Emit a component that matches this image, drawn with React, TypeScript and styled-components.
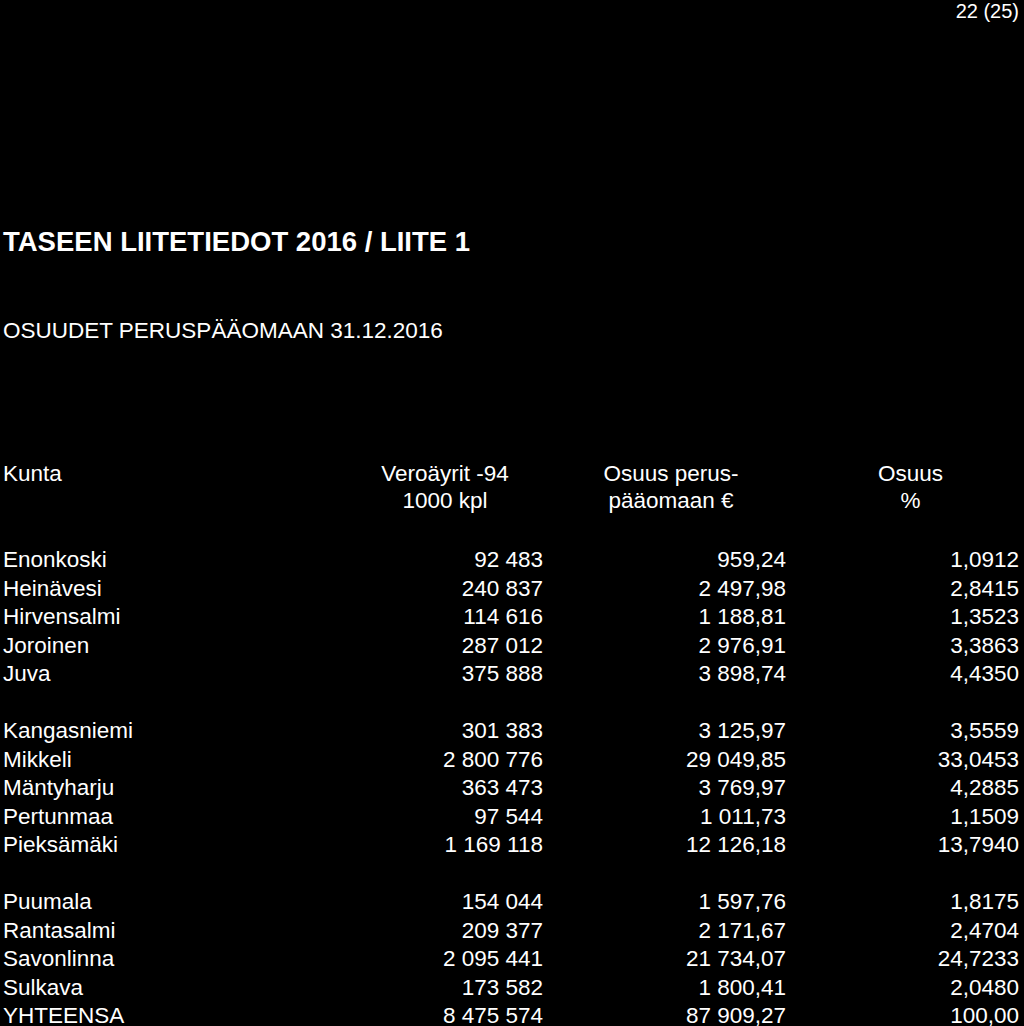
import styled, { createGlobalStyle } from 'styled-components';

const GlobalStyle = createGlobalStyle`
  html, body {
    margin: 0;
    padding: 0;
    background: #000;
  }
  body {
    font-family: "Liberation Sans", Arial, sans-serif;
    color: #fff;
  }
`;

type Row = [string, string, string, string];

const groups: Row[][] = [
  [
    ['Enonkoski', '92 483', '959,24', '1,0912'],
    ['Heinävesi', '240 837', '2 497,98', '2,8415'],
    ['Hirvensalmi', '114 616', '1 188,81', '1,3523'],
    ['Joroinen', '287 012', '2 976,91', '3,3863'],
    ['Juva', '375 888', '3 898,74', '4,4350'],
  ],
  [
    ['Kangasniemi', '301 383', '3 125,97', '3,5559'],
    ['Mikkeli', '2 800 776', '29 049,85', '33,0453'],
    ['Mäntyharju', '363 473', '3 769,97', '4,2885'],
    ['Pertunmaa', '97 544', '1 011,73', '1,1509'],
    ['Pieksämäki', '1 169 118', '12 126,18', '13,7940'],
  ],
  [
    ['Puumala', '154 044', '1 597,76', '1,8175'],
    ['Rantasalmi', '209 377', '2 171,67', '2,4704'],
    ['Savonlinna', '2 095 441', '21 734,07', '24,7233'],
    ['Sulkava', '173 582', '1 800,41', '2,0480'],
    ['YHTEENSA', '8 475 574', '87 909,27', '100,00'],
  ],
];

const Page = styled.div`
  width: 1024px;
  height: 1026px;
  overflow: hidden;
  box-sizing: border-box;
  padding: 1px 5px 0 3px;
`;

const PageNumber = styled.div`
  font-size: 20px;
  line-height: 20px;
  text-align: right;
`;

const Title = styled.h1`
  margin: 205px 0 0;
  font-size: 27.5px;
  line-height: 32px;
  font-weight: bold;
`;

const Subtitle = styled.div`
  margin-top: 60px;
  font-size: 22.5px;
  line-height: 26px;
`;

const Table = styled.div`
  display: grid;
  grid-template-columns: 347px 193px 243px 233px;
  font-size: 22.5px;
`;

// rows only group cells for readability, the grid does the layout
const TableRow = styled.div`
  display: contents;
`;

const HeaderCell = styled.div<{ $shift?: number }>`
  margin: 116px 0 32px;
  line-height: 27px;
  text-align: center;
  padding-left: ${(p) => (p.$shift && p.$shift > 0 ? p.$shift : 0)}px;
  padding-right: ${(p) => (p.$shift && p.$shift < 0 ? -p.$shift : 0)}px;
`;

const NameHeader = styled(HeaderCell)`
  text-align: left;
`;

const Cell = styled.div<{ $gapAfter?: boolean }>`
  line-height: 28.5px;
  text-align: right;
  white-space: nowrap;
  margin-bottom: ${(p) => (p.$gapAfter ? '28.5px' : '0')};
`;

const NameCell = styled(Cell)`
  text-align: left;
`;

export default function App() {
  return (
    <>
      <GlobalStyle />
      <Page>
        <PageNumber>22 (25)</PageNumber>
        <Title>TASEEN LIITETIEDOT 2016 / LIITE 1</Title>
        <Subtitle>OSUUDET PERUSPÄÄOMAAN 31.12.2016</Subtitle>
        <Table>
          <TableRow>
            <NameHeader>Kunta</NameHeader>
            <HeaderCell $shift={-3}>
              Veroäyrit -94
              <br />
              1000 kpl
            </HeaderCell>
            <HeaderCell $shift={13}>
              Osuus perus-
              <br />
              pääomaan €
            </HeaderCell>
            <HeaderCell $shift={16}>
              Osuus
              <br />%
            </HeaderCell>
          </TableRow>
          {groups.map((rows, gi) =>
            rows.map((row, ri) => {
              const gap = gi < groups.length - 1 && ri === rows.length - 1;
              return (
                <TableRow key={row[0]}>
                  <NameCell $gapAfter={gap}>{row[0]}</NameCell>
                  <Cell $gapAfter={gap}>{row[1]}</Cell>
                  <Cell $gapAfter={gap}>{row[2]}</Cell>
                  <Cell $gapAfter={gap}>{row[3]}</Cell>
                </TableRow>
              );
            })
          )}
        </Table>
      </Page>
    </>
  );
}
